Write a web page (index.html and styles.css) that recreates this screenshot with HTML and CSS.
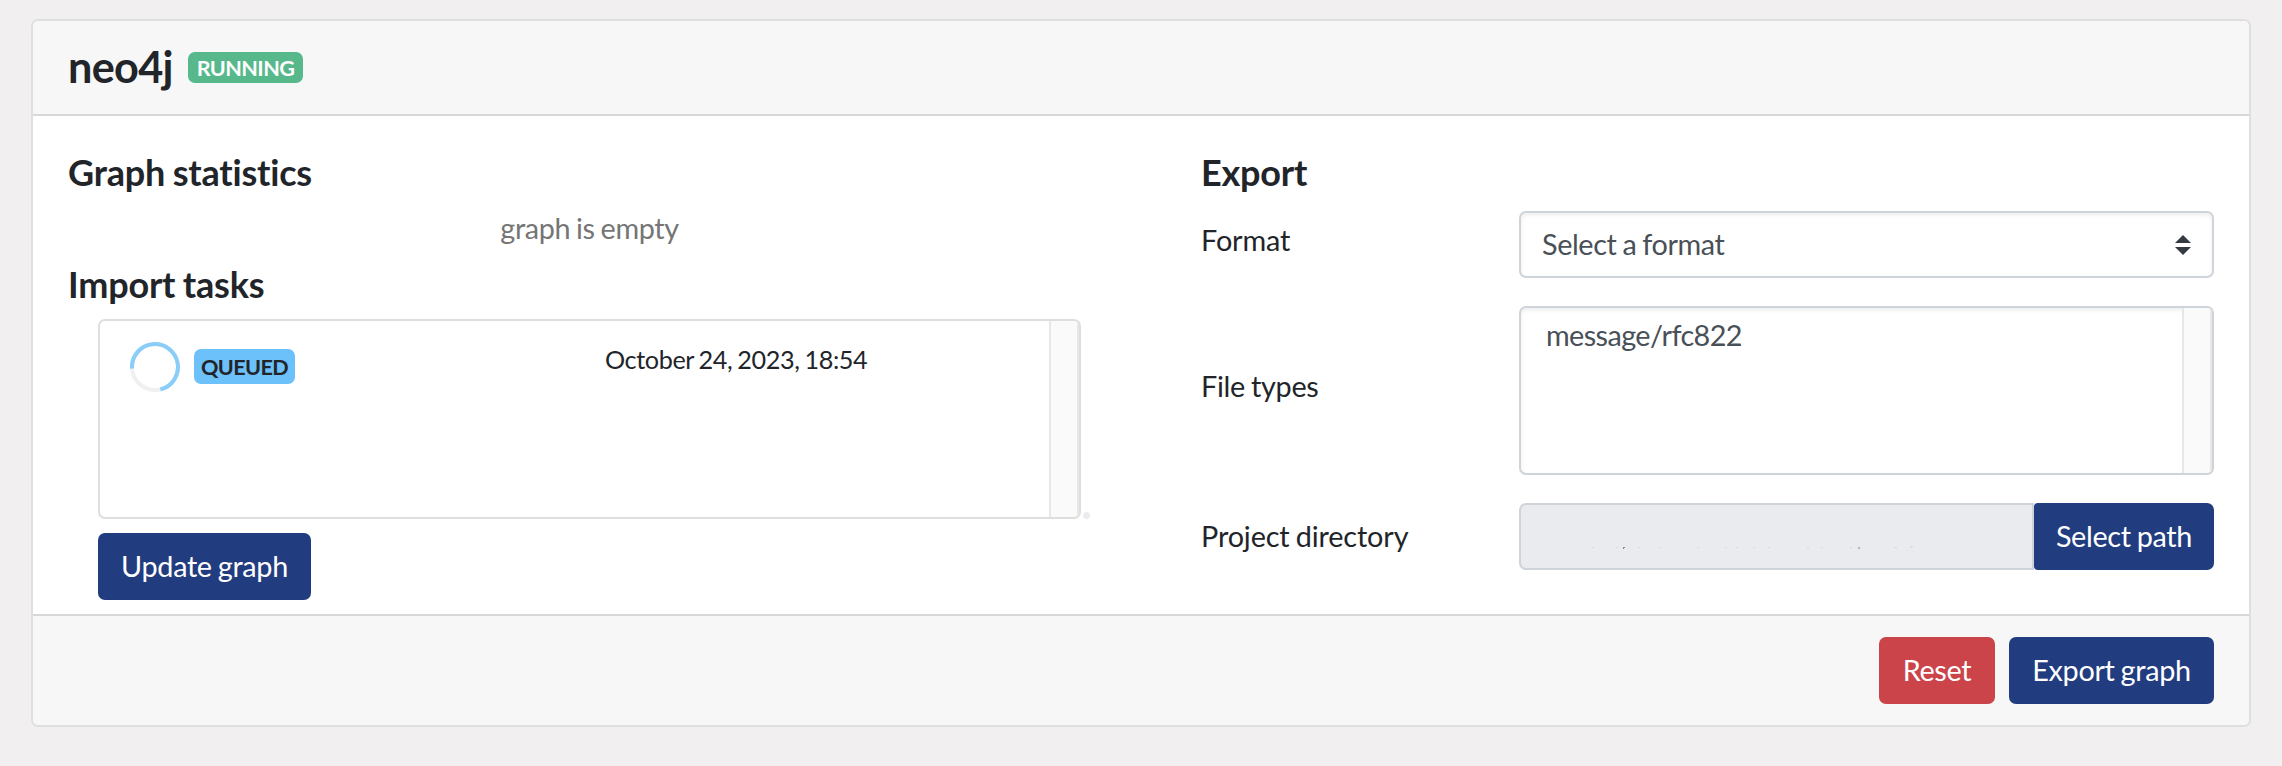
FILE: index.html
```html
<!DOCTYPE html>
<html lang="en">
<head>
<meta charset="utf-8">
<title>neo4j</title>
<link rel="stylesheet" href="styles.css">
</head>
<body>
<main class="card">
  <header class="card-header">
    <h3 class="title">neo4j</h3>
    <span class="badge badge-running">RUNNING</span>
  </header>
  <div class="card-body">
    <section class="column">
      <h4 class="heading">Graph statistics</h4>
      <p class="empty">graph is empty</p>
      <h4 class="heading">Import tasks</h4>
      <div class="tasks">
        <div class="task-list">
          <div class="task">
            <div class="task-state">
              <svg class="spinner" viewBox="0 0 50 50">
                <circle cx="25" cy="25" r="23" fill="none" stroke="#f0f0f0" stroke-width="4"/>
                <path d="M2 26.5A23 23 0 1 1 30.4 47.4" fill="none" stroke="#8acdf8" stroke-width="4"/>
              </svg>
              <span class="badge badge-queued">QUEUED</span>
            </div>
            <span class="task-date">October 24, 2023, 18:54</span>
          </div>
          <div class="track"></div>
        </div>
        <i class="dot"></i>
      </div>
      <button class="btn btn-update">Update graph</button>
    </section>
    <section class="column">
      <h4 class="heading">Export</h4>
      <div class="row row-format">
        <label class="label">Format</label>
        <div class="control select">
          <span>Select a format</span>
          <svg class="arrows" viewBox="0 0 16 20"><path d="M0 8L8 0L16 8ZM0 12H16L8 20Z" fill="#343a40"/></svg>
        </div>
      </div>
      <div class="row row-types">
        <label class="label">File types</label>
        <div class="control listbox">
          <span class="option">message/rfc822</span>
          <div class="track"></div>
        </div>
      </div>
      <div class="row row-path">
        <label class="label">Project directory</label>
        <div class="path-group">
          <div class="control path">
            <svg class="specks" viewBox="0 0 511 63">
              <path d="M71 42.5h2M95 42.5h2M117 42.5h2M138 42.5h2M176 42.5h2M204 42.5h2M215 42.5h2M232 42.5h2M247 42.5h2M286 42.5h2M300 42.5h2M329 42.5h2M373 42.5h3M389 42.5h2M390 41.5h2" stroke="#d9dade"/>
              <path d="M102 42.5h2M102 43.5h1" stroke="#85878b"/>
              <path d="M337 42.5h2M337 43.5h2" stroke="#b4b5b9"/>
            </svg>
          </div>
          <button class="btn btn-path">Select path</button>
        </div>
      </div>
    </section>
  </div>
  <footer class="card-footer">
    <button class="btn btn-danger">Reset</button>
    <button class="btn btn-export">Export graph</button>
  </footer>
</main>
</body>
</html>
```

FILE: styles.css
```css
* { box-sizing: border-box; }
body {
  margin: 0;
  padding: 19px 31px 0;
  background: #f1eff0;
  color: #212529;
  font: 28.8px/1.5 Lato, "Liberation Sans", sans-serif;
  letter-spacing: -.4px;
  word-spacing: -1px;
}
.card {
  height: 708px;
  display: flex;
  flex-direction: column;
  border: 2px solid #dfdfdf;
  border-radius: 7px;
  background: #fff;
  overflow: hidden;
}
.card-header {
  height: 95px;
  flex: none;
  display: flex;
  align-items: flex-start;
  padding: 20px 35px 0;
  background: #f7f7f7;
  border-bottom: 2px solid #d8d8d8;
}
.title { margin: 0; width: 120px; font-size: 43.2px; line-height: 50px; font-weight: 700; letter-spacing: -.7px; }
.badge { display: block; border-radius: 7px; font-weight: 700; letter-spacing: -.6px; text-align: center; white-space: nowrap; }
.badge-running { width: 115px; height: 31px; margin-top: 11px; background: #56b88b; color: #fff; font-size: 21.6px; line-height: 33px; }
.badge-queued { width: 101px; height: 35px; margin-top: 7px; background: #6dc1fb; font-size: 21.6px; line-height: 37px; }
.card-body { flex: 1; display: grid; grid-template-columns: 1133px 1013px; padding: 35px 35px 0; }
.heading { margin: 0; font-size: 36px; line-height: 43px; font-weight: 700; letter-spacing: -.2px; }
.empty { margin: 0; width: 1043px; height: 69px; padding-top: 13px; line-height: 43px; color: #757575; text-align: center; }
.tasks { display: flex; align-items: flex-end; gap: 2px; margin: 13px 0 14px 30px; }
.task-list { width: 983px; height: 200px; display: flex; border: 2px solid #dedede; border-radius: 7px; overflow: hidden; }
.task { flex: 1; display: flex; padding: 21px 0 0 30px; }
.task-state { display: flex; gap: 14px; width: 475px; }
.spinner { width: 50px; height: 50px; }
.task-date { font-size: 25.2px; line-height: 35px; }
.track { width: 30px; background: #fafafa; border: solid #e7e7e7; border-width: 0 2px; }
.dot { width: 7px; height: 7px; border-radius: 50%; background: #ebebf0; }
.btn {
  height: 67px;
  padding: 0;
  border: 0;
  border-radius: 7px;
  background: #223c80;
  color: #fff;
  font: inherit;
  line-height: 67px;
  letter-spacing: -.33px;
  word-spacing: -1px;
}
.btn-update { width: 213px; margin-left: 30px; }
.row { display: grid; grid-template-columns: 318px 695px; }
.row-format { margin-top: 17px; }
.row-types { margin-top: 28px; }
.row-path { margin-top: 28px; }
.label { line-height: 43px; letter-spacing: -.13px; }
.row-format .label { padding-top: 8px; }
.row-types .label { padding-top: 59px; letter-spacing: -.3px; }
.row-path .label { padding-top: 12px; }
.control { border: 2px solid #ced4da; border-radius: 7px; background: #fff; color: #495057; box-shadow: inset 0 2px 4px rgba(0, 0, 0, .075); }
.select { height: 67px; display: flex; align-items: center; justify-content: space-between; padding: 0 21px; }
.arrows { width: 16px; height: 20px; }
.listbox { height: 169px; display: flex; justify-content: space-between; overflow: hidden; padding-left: 25px; }
.option { padding-top: 6px; letter-spacing: -.6px; }
.path-group { display: flex; }
.path { width: 515px; height: 67px; background: #eaebef; box-shadow: none; border-radius: 7px 0 0 7px; }
.specks { display: block; width: 511px; height: 63px; }
.btn-path { width: 180px; border-radius: 4px 7px 7px 4px; }
.card-footer {
  height: 111px;
  flex: none;
  display: flex;
  justify-content: flex-end;
  gap: 14px;
  padding: 21px 35px 0;
  background: #f7f7f7;
  border-top: 2px solid #d8d8d8;
}
.btn-danger { width: 116px; background: #ca444a; }
.btn-export { width: 205px; }
```
